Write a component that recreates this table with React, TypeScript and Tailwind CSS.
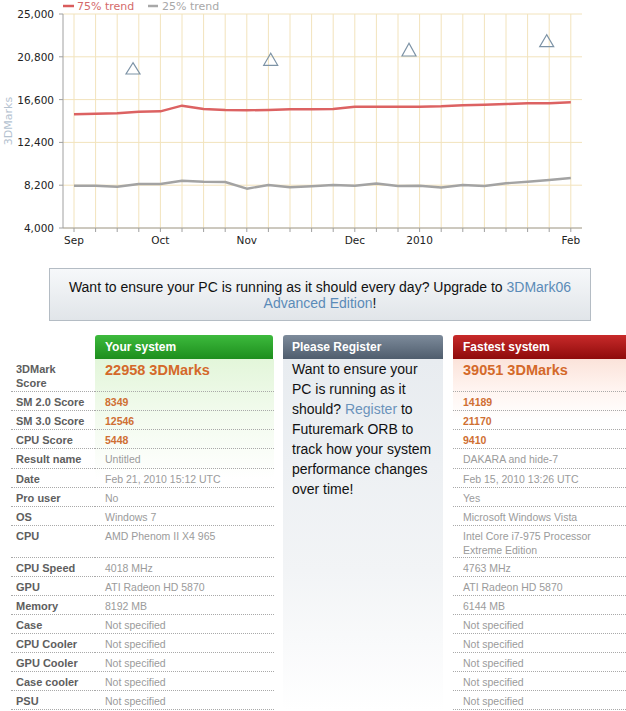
import React from "react";

const XS = Array.from({ length: 24 }, (_, i) => 74 + i * 21.6);
const HY = [14, 56.8, 99.6, 142.4, 185.2, 228];
const YLABELS = ["25,000", "20,800", "16,600", "12,400", "8,200", "4,000"];
const RED = [114.3, 113.7, 113.3, 111.7, 111.3, 105.7, 109, 110, 110.3, 110, 109.3, 109.3, 109, 106.7, 106.7, 106.7, 106.7, 106.3, 105.3, 104.7, 104, 103.3, 103.3, 102.3];
const GRAY = [185.7, 185.7, 186.7, 184, 184, 180.7, 181.7, 182, 188.7, 185, 187.3, 186.3, 185, 185.7, 183.5, 186, 185.7, 187.5, 185, 186, 183.3, 181.7, 180, 178];
const XLABELS: [number, string][] = [
  [0, "Sep"],
  [4, "Oct"],
  [8, "Nov"],
  [13, "Dec"],
  [16, "2010"],
  [23, "Feb"],
];
const TRIS: [number, number, number][] = [
  [133, 62.7, 74],
  [270.7, 53.3, 65.3],
  [409, 43.3, 56],
  [546.7, 34.7, 46.7],
];

function path(ys: number[]) {
  return ys.map((y, i) => `${i === 0 ? "M" : "L"}${XS[i].toFixed(1)} ${y}`).join(" ");
}

function Chart() {
  const font = "'DejaVu Sans', Verdana, sans-serif";
  return (
    <svg width={626} height={255} className="block">
      {/* legend */}
      <line x1={63} y1={6} x2={74} y2={6} stroke="#d95c5c" strokeWidth={2.5} />
      <text x={77} y={10} fontFamily={font} fontSize={11} fill="#d46a6a">75% trend</text>
      <line x1={148} y1={6} x2={158} y2={6} stroke="#a8a8a8" strokeWidth={2.5} />
      <text x={162} y={10} fontFamily={font} fontSize={11} fill="#a8a8a8">25% trend</text>

      {/* grid */}
      {XS.map((x, i) => (
        <line key={"v" + i} x1={x} y1={14} x2={x} y2={228} stroke="#f2e3bc" strokeWidth={1} />
      ))}
      {HY.map((y, i) => (
        <line key={"h" + i} x1={63} y1={y} x2={582} y2={y} stroke="#f2e3bc" strokeWidth={1} />
      ))}

      {/* axes */}
      <line x1={63} y1={14} x2={63} y2={228} stroke="#a0a0a0" strokeWidth={1} />
      <line x1={63} y1={228} x2={582} y2={228} stroke="#a0a0a0" strokeWidth={1} />
      {HY.map((y, i) => (
        <line key={"yt" + i} x1={59} y1={y} x2={63} y2={y} stroke="#a0a0a0" strokeWidth={1} />
      ))}
      {XS.map((x, i) => (
        <line key={"xt" + i} x1={x} y1={228} x2={x} y2={232} stroke="#a0a0a0" strokeWidth={1} />
      ))}

      {/* y labels */}
      {HY.map((y, i) => (
        <text key={"yl" + i} x={54} y={y + 4} textAnchor="end" fontFamily={font} fontSize={10.5} fill="#222">
          {YLABELS[i]}
        </text>
      ))}
      <text
        x={0}
        y={0}
        transform="translate(12 121) rotate(-90)"
        textAnchor="middle"
        fontFamily={font}
        fontSize={11}
        fill="#b4c2d0"
      >
        3DMarks
      </text>

      {/* x labels */}
      {XLABELS.map(([i, t]) => (
        <text key={t} x={XS[i]} y={244} textAnchor="middle" fontFamily={font} fontSize={10.5} fill="#222">
          {t}
        </text>
      ))}

      {/* series */}
      <path d={path(RED)} fill="none" stroke="#dc6262" strokeWidth={2.4} strokeLinejoin="round" />
      <path d={path(GRAY)} fill="none" stroke="#a3a3a3" strokeWidth={2.4} strokeLinejoin="round" />

      {/* triangles */}
      {TRIS.map(([x, top, base], i) => (
        <polygon
          key={"t" + i}
          points={`${x},${top} ${x - 7},${base} ${x + 7},${base}`}
          fill="none"
          stroke="#7d93a6"
          strokeWidth={1.2}
        />
      ))}
    </svg>
  );
}

type Row = {
  label: React.ReactNode;
  your: React.ReactNode;
  fast: React.ReactNode;
  h: string;
  kind: "big" | "score" | "text";
};

const ROWS: Row[] = [
  { label: <>3DMark<br />Score</>, your: "22958 3DMarks", fast: "39051 3DMarks", h: "h-[33px]", kind: "big" },
  { label: "SM 2.0 Score", your: "8349", fast: "14189", h: "h-[19px]", kind: "score" },
  { label: "SM 3.0 Score", your: "12546", fast: "21170", h: "h-[19px]", kind: "score" },
  { label: "CPU Score", your: "5448", fast: "9410", h: "h-[19px]", kind: "score" },
  { label: "Result name", your: "Untitled", fast: "DAKARA and hide-7", h: "h-[20px]", kind: "text" },
  { label: "Date", your: "Feb 21, 2010 15:12 UTC", fast: "Feb 15, 2010 13:26 UTC", h: "h-[19px]", kind: "text" },
  { label: "Pro user", your: "No", fast: "Yes", h: "h-[19px]", kind: "text" },
  { label: "OS", your: "Windows 7", fast: "Microsoft Windows Vista", h: "h-[19px]", kind: "text" },
  { label: "CPU", your: "AMD Phenom II X4 965", fast: <>Intel Core i7-975 Processor<br />Extreme Edition</>, h: "h-[32px]", kind: "text" },
  { label: "CPU Speed", your: "4018 MHz", fast: "4763 MHz", h: "h-[19px]", kind: "text" },
  { label: "GPU", your: "ATI Radeon HD 5870", fast: "ATI Radeon HD 5870", h: "h-[19px]", kind: "text" },
  { label: "Memory", your: "8192 MB", fast: "6144 MB", h: "h-[19px]", kind: "text" },
  { label: "Case", your: "Not specified", fast: "Not specified", h: "h-[19px]", kind: "text" },
  { label: "CPU Cooler", your: "Not specified", fast: "Not specified", h: "h-[19px]", kind: "text" },
  { label: "GPU Cooler", your: "Not specified", fast: "Not specified", h: "h-[19px]", kind: "text" },
  { label: "Case cooler", your: "Not specified", fast: "Not specified", h: "h-[19px]", kind: "text" },
  { label: "PSU", your: "Not specified", fast: "Not specified", h: "h-[19px]", kind: "text" },
];

function ValueCell({ row, value }: { row: Row; value: React.ReactNode }) {
  const base = `${row.h} border-b border-dotted border-[#a9a9a9] pl-[10px] whitespace-nowrap`;
  if (row.kind === "big")
    return (
      <div className={`${base} pt-[3px] text-[14.5px] leading-[17px] font-bold text-[#d4692a]`}>{value}</div>
    );
  if (row.kind === "score")
    return (
      <div className={`${base} pt-[3px] text-[10.5px] leading-[14px] font-bold text-[#cf6f33]`}>{value}</div>
    );
  return <div className={`${base} pt-[3px] text-[10.5px] leading-[14px] text-[#9b9b9b]`}>{value}</div>;
}

function Table() {
  return (
    <div className="mt-[14px] flex pl-[11px]">
      {/* labels */}
      <div className="w-[84px] shrink-0">
        <div className="h-[24px]" />
        {ROWS.map((r, i) => (
          <div
            key={i}
            className={`${r.h} border-b border-dotted border-[#a9a9a9] pl-[5px] pt-[3px] text-[11px] leading-[14px] font-bold text-[#5e5e5e]`}
          >
            {r.label}
          </div>
        ))}
      </div>

      {/* your system */}
      <div className="w-[179px] shrink-0">
        <div className="h-[24px] w-[178px] rounded-t-[3px] bg-[linear-gradient(to_bottom,#3dba3d,#1d8e1d)] pl-[10px] text-[12px] leading-[24px] font-bold text-white">
          Your system
        </div>
        <div className="bg-[linear-gradient(to_bottom,#e3f6da,#f3fbef_60px,#ffffff_120px)]">
          {ROWS.map((r, i) => (
            <ValueCell key={i} row={r} value={r.your} />
          ))}
        </div>
      </div>

      {/* register */}
      <div className="ml-[9px] w-[160px] shrink-0">
        <div className="h-[24px] rounded-t-[3px] bg-[linear-gradient(to_bottom,#7d8b9b,#4f5d6d)] pl-[9px] text-[12px] leading-[24px] font-bold text-white">
          Please Register
        </div>
        <div className="h-[352px] bg-[linear-gradient(to_bottom,#e8ecf0,#f2f4f6_60%,#ffffff)] pl-[9px] text-[14px] leading-[20px] text-[#111]">
          Want to ensure your
          <br />
          PC is running as it
          <br />
          should? <span className="text-[#6b93bb]">Register</span> to
          <br />
          Futuremark ORB to
          <br />
          track how your system
          <br />
          performance changes
          <br />
          over time!
        </div>
      </div>

      {/* fastest */}
      <div className="ml-[10px] flex-1">
        <div className="h-[24px] rounded-tl-[3px] bg-[linear-gradient(to_bottom,#c82a2a,#8e0b0b)] pl-[10px] text-[12px] leading-[24px] font-bold text-white">
          Fastest system
        </div>
        <div className="bg-[linear-gradient(to_bottom,#fbe3da,#fff4f0_30px,#ffffff_60px)]">
          {ROWS.map((r, i) => (
            <ValueCell key={i} row={r} value={r.fast} />
          ))}
        </div>
      </div>
    </div>
  );
}

export default function App() {
  return (
    <div className="w-[626px] h-[711px] overflow-hidden bg-white font-['Liberation_Sans',Arial,sans-serif] text-black">
      <Chart />
      <div className="ml-[49px] mt-[13px] h-[53px] w-[542px] border border-[#b4bcc4] bg-[linear-gradient(to_bottom,#f6f8fa,#e1e5e9)] pt-[10px] text-center text-[14px] leading-[16px] text-[#111]">
        Want to ensure your PC is running as it should every day? Upgrade to{" "}
        <span className="text-[#5b8bb8]">3DMark06</span>
        <br />
        <span className="text-[#5b8bb8]">Advanced Edition</span>!
      </div>
      <Table />
    </div>
  );
}
